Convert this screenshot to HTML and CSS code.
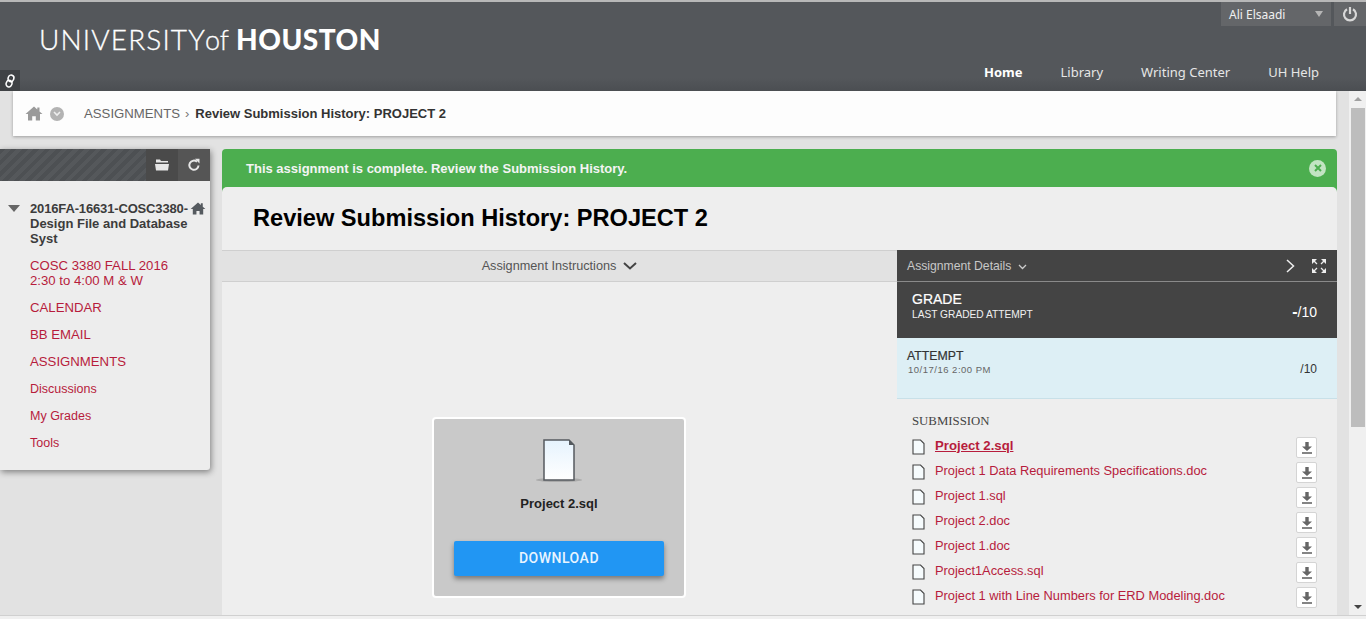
FILE: index.html
```html
<!DOCTYPE html>
<html lang="en">
<head>
    <meta charset="UTF-8">
    <title>Review Submission History: PROJECT 2</title>
    <link rel="stylesheet" href="styles.css">
</head>
<body>
    <header class="top">
        <div class="logo"><span class="logo-light">UNIVERSITY</span><span class="logo-of">of</span><span class="logo-bold">HOUSTON</span></div>
        <div class="top-right">
            <div class="user-row">
                <div class="user">Ali Elsaadi<span class="user-caret"></span></div>
                <div class="power">
                    <svg width="16" height="16" viewBox="0 0 16 16"><path d="M5 3.2a6 6 0 1 0 6 0" fill="none" stroke="#d8d8d8" stroke-width="2.2"/><path d="M8 1v7" stroke="#d8d8d8" stroke-width="2.2"/></svg>
                </div>
            </div>
            <nav class="nav">
                <a class="active">Home</a>
                <a>Library</a>
                <a>Writing Center</a>
                <a>UH Help</a>
            </nav>
        </div>
        <div class="link-badge">
            <svg width="14" height="14" viewBox="0 0 12 12"><g fill="none" stroke="#fff" stroke-width="1.3" transform="rotate(20 6 6)"><rect x="3.6" y="0.8" width="4.8" height="5.6" rx="2.4"/><rect x="3.6" y="5.6" width="4.8" height="5.6" rx="2.4"/></g></svg>
        </div>
    </header>

    <div class="page">
        <div class="page-inner">
            <div class="crumbs">
                <svg class="crumb-home" width="18" height="15" viewBox="0 0 18 15"><path d="M9 0.5L0.5 8h2.5v6.5h4.2v-4.2h3.6v4.2H15V8h2.5L14.500 5.400V1.500h-2.200v1.900z" fill="#9a9a9a"/></svg>
                <span class="crumb-menu">
                    <svg width="8" height="6" viewBox="0 0 8 6"><path d="M1 1l3 3 3-3" fill="none" stroke="#eee" stroke-width="1.6"/></svg>
                </span>
                <span class="crumb-link">ASSIGNMENTS</span>
                <span class="crumb-sep">›</span>
                <span class="crumb-current">Review Submission History: PROJECT 2</span>
            </div>

            <div class="columns">
                <aside class="side">
                    <div class="side-bar">
                        <div class="side-stripes"></div>
                        <div class="side-tool side-tool-first">
                            <svg width="14" height="12" viewBox="0 0 14 12"><path d="M1 0.500h4l1 1.500h7v1.500H1zM0 5h14l-1 6.500H1z" fill="#e6e6e6"/></svg>
                        </div>
                        <div class="side-tool">
                            <svg width="14" height="14" viewBox="0 0 14 14"><path d="M11.500 7.500a4.600 4.600 0 1 1-1.500-3.700" fill="none" stroke="#e6e6e6" stroke-width="2"/><path d="M8 0.800h4.500v4.700z" fill="#e6e6e6"/></svg>
                        </div>
                    </div>
                    <div class="side-body">
                        <div class="course">
                            <span class="course-caret"></span>
                            <span class="course-name"><span class="course-code">2016FA-16631-COSC3380-</span><br>Design File and Database<br>Syst</span>
                            <svg class="course-home" width="16" height="13" viewBox="0 0 18 15"><path d="M9 0.5L0.5 8h2.5v6.500h4.200v-4.200h3.600v4.200H15V8h2.500L14.500 5.400V1.500h-2.200v1.900z" fill="#555a5f"/></svg>
                        </div>
                        <ul class="side-menu">
                            <li>COSC 3380 FALL 2016<br>2:30 to 4:00 M &amp; W</li>
                            <li>CALENDAR</li>
                            <li>BB EMAIL</li>
                            <li>ASSIGNMENTS</li>
                            <li class="side-small">Discussions</li>
                            <li class="side-small">My Grades</li>
                            <li class="side-small">Tools</li>
                        </ul>
                    </div>
                </aside>

                <main class="main">
                    <div class="notice">
                        <span>This assignment is complete. Review the Submission History.</span>
                        <span class="notice-close">
                            <svg width="8" height="8" viewBox="0 0 8 8"><path d="M1 1l6 6M7 1L1 7" stroke="#4cae4f" stroke-width="2"/></svg>
                        </span>
                    </div>
                    <div class="panel">
                        <h1 class="title">Review Submission History: PROJECT 2</h1>
                        <div class="split">
                            <section class="viewer">
                                <div class="instructions">Assignment Instructions
                                    <svg width="14" height="8" viewBox="0 0 14 8"><path d="M1 1l6 5.500L13 1" fill="none" stroke="#444" stroke-width="2"/></svg>
                                </div>
                                <div class="viewer-body">
                                    <div class="file-card">
                                        <svg class="file-big" width="48" height="46" viewBox="0 0 48 46">
                                            <defs>
                                                <linearGradient id="sheet" x1="0" y1="0" x2="0" y2="1"><stop offset="0" stop-color="#e6f3fd"/><stop offset="1" stop-color="#ffffff"/></linearGradient>
                                            </defs>
                                            <ellipse cx="24" cy="41" rx="23" ry="2" fill="#a9a9a9"/>
                                            <path d="M9 1h25l5 5v35H9z" fill="url(#sheet)" stroke="#555a5f" stroke-width="1.500"/>
                                            <path d="M34 1l5 5h-5z" fill="#555a5f"/>
                                        </svg>
                                        <div class="file-big-name">Project 2.sql</div>
                                        <a class="download">DOWNLOAD</a>
                                    </div>
                                </div>
                            </section>
                            <section class="details">
                                <div class="details-head">
                                    <span class="details-label">Assignment Details
                                        <svg class="details-caret" width="9" height="6" viewBox="0 0 9 6"><path d="M1 1l3.500 3.500L8 1" fill="none" stroke="#ccc" stroke-width="1.300"/></svg>
                                    </span>
                                    <svg class="details-next" width="9" height="14" viewBox="0 0 9 14"><path d="M1 1l6.500 6L1 13" fill="none" stroke="#eee" stroke-width="1.500"/></svg>
                                    <svg width="16" height="16" viewBox="0 0 16 16"><path d="M1 1h5L1 6zM15 1h-5l5 5zM1 15h5l-5-5zM15 15h-5l5-5z" fill="#eee"/><path d="M2.500 2.500L6 6M13.500 2.500L10 6M2.500 13.500L6 10M13.500 13.500L10 10" stroke="#eee" stroke-width="1.300"/></svg>
                                </div>
                                <div class="grade">
                                    <div>
                                        <div class="grade-title">GRADE</div>
                                        <div class="grade-sub">LAST GRADED ATTEMPT</div>
                                    </div>
                                    <div class="grade-value"><b>-</b>/10</div>
                                </div>
                                <div class="attempt">
                                    <div>
                                        <div class="attempt-title">ATTEMPT</div>
                                        <div class="attempt-date">10/17/16 2:00 PM</div>
                                    </div>
                                    <div class="attempt-value">/10</div>
                                </div>
                                <div class="submission">
                                    <div class="submission-title">SUBMISSION</div>
                                    <ul class="files">
                                        <li class="current"><svg class="doc" width="13" height="16" viewBox="0 0 13 16"><use href="#doc"/></svg><a>Project 2.sql</a><span class="dl"><svg width="12" height="13" viewBox="0 0 12 13"><use href="#dl"/></svg></span></li>
                                        <li><svg class="doc" width="13" height="16" viewBox="0 0 13 16"><use href="#doc"/></svg><a>Project 1 Data Requirements Specifications.doc</a><span class="dl"><svg width="12" height="13" viewBox="0 0 12 13"><use href="#dl"/></svg></span></li>
                                        <li><svg class="doc" width="13" height="16" viewBox="0 0 13 16"><use href="#doc"/></svg><a>Project 1.sql</a><span class="dl"><svg width="12" height="13" viewBox="0 0 12 13"><use href="#dl"/></svg></span></li>
                                        <li><svg class="doc" width="13" height="16" viewBox="0 0 13 16"><use href="#doc"/></svg><a>Project 2.doc</a><span class="dl"><svg width="12" height="13" viewBox="0 0 12 13"><use href="#dl"/></svg></span></li>
                                        <li><svg class="doc" width="13" height="16" viewBox="0 0 13 16"><use href="#doc"/></svg><a>Project 1.doc</a><span class="dl"><svg width="12" height="13" viewBox="0 0 12 13"><use href="#dl"/></svg></span></li>
                                        <li><svg class="doc" width="13" height="16" viewBox="0 0 13 16"><use href="#doc"/></svg><a>Project1Access.sql</a><span class="dl"><svg width="12" height="13" viewBox="0 0 12 13"><use href="#dl"/></svg></span></li>
                                        <li><svg class="doc" width="13" height="16" viewBox="0 0 13 16"><use href="#doc"/></svg><a>Project 1 with Line Numbers for ERD Modeling.doc</a><span class="dl"><svg width="12" height="13" viewBox="0 0 12 13"><use href="#dl"/></svg></span></li>
                                    </ul>
                                </div>
                            </section>
                        </div>
                    </div>
                </main>
            </div>
        </div>
        <div class="scrollbar">
            <span class="arrow-up"></span>
            <div class="thumb"></div>
            <span class="arrow-down"></span>
        </div>
    </div>
    <div class="bottom-strip"></div>

    <svg class="sprites" width="0" height="0">
        <symbol id="doc" viewBox="0 0 13 16"><path d="M1 1h7.500L12 4.500V15H1z" fill="#f6fbfd" stroke="#444" stroke-width="1.100"/></symbol>
        <symbol id="dl" viewBox="0 0 12 13"><path d="M4.300 1h3.400v4.500H11L6 10 1 5.500h3.300z" fill="#666"/><path d="M1 12h10" stroke="#666" stroke-width="1.600"/></symbol>
    </svg>
</body>
</html>
```

FILE: styles.css
```css
* {
    box-sizing: border-box;
}
html, body {
    height: 100%;
}
body {
    margin: 0;
    overflow: hidden;
    font-family: "Liberation Sans", Arial, sans-serif;
    background-color: #e2e2e2;
    color: #222;
}
ul {
    list-style: none;
    margin: 0;
    padding: 0;
}

/* top banner */
.top {
    position: relative;
    height: 91px;
    padding: 0 11px 0 39px;
    display: flex;
    justify-content: space-between;
    background: linear-gradient(#54575b 85%, #4b4e52);
    border-top: 2px solid #b8b8b8;
}
.logo {
    padding-top: 20px;
    color: #fff;
    font-family: "Lato", sans-serif;
    font-size: 28px;
    line-height: 34px;
    white-space: nowrap;
}
.logo-light {
    font-weight: 300;
    letter-spacing: 1.15px;
    -webkit-text-stroke: 0.3px #fff;
}
.logo-of {
    font-weight: 300;
    font-size: 27px;
    margin: 0 7px 0 -1px;
    -webkit-text-stroke: 0.3px #fff;
}
.logo-bold {
    font-weight: 900;
    letter-spacing: 0.5px;
}
.top-right {
    display: flex;
    flex-direction: column;
    align-items: flex-end;
}
.user-row {
    display: flex;
    gap: 3px;
    margin-right: -11px;
}
.user {
    width: 110px;
    height: 24px;
    padding-left: 8px;
    display: flex;
    align-items: center;
    justify-content: space-between;
    background-color: #646669;
    color: #f0f0f0;
    font-family: "Noto Sans", sans-serif;
    font-size: 12px;
}
.user-caret {
    margin-right: 8px;
    border-left: 4.500px solid transparent;
    border-right: 4.500px solid transparent;
    border-top: 6px solid #b5b5b5;
}
.power {
    width: 32px;
    height: 24px;
    display: flex;
    align-items: center;
    justify-content: center;
    background-color: #646669;
}
.nav {
    display: flex;
    gap: 38px;
    margin-top: 37px;
    margin-right: 36px;
    font-family: "Noto Sans", sans-serif;
    font-size: 13px;
    line-height: 18px;
    color: #e6e6e6;
}
.nav .active {
    font-weight: 700;
    color: #fff;
}
.link-badge {
    position: absolute;
    left: 0;
    top: 68px;
    width: 20px;
    height: 21px;
    display: flex;
    align-items: center;
    justify-content: center;
    background-color: #3f4245;
}

/* everything under the banner */
.page {
    display: flex;
    height: 524px;
    overflow: hidden;
}
.page-inner {
    flex: 1;
    min-width: 0;
    overflow: hidden;
    padding-right: 12px;
}
.crumbs {
    height: 45px;
    margin: 0 1px 0 13px;
    padding-left: 12px;
    display: flex;
    align-items: center;
    background-color: #fdfdfd;
    box-shadow: 0 1px 3px rgba(0, 0, 0, 0.3);
    font-size: 13px;
}
.crumb-menu {
    width: 14px;
    height: 14px;
    margin: 0 20px 0 7px;
    display: flex;
    align-items: center;
    justify-content: center;
    border-radius: 50%;
    background-color: #b3b3b3;
}
.crumb-link {
    color: #666;
    font-size: 13.200px;
}
.crumb-sep {
    margin: 0 6px 0 5px;
    color: #777;
}
.crumb-current {
    font-weight: 700;
    color: #333;
}
.columns {
    display: flex;
    align-items: flex-start;
    gap: 12px;
    margin-top: 13px;
}

/* course menu */
.side {
    width: 210px;
    flex-shrink: 0;
    background-color: #ededed;
    box-shadow: 1px 2px 6px rgba(0, 0, 0, 0.45);
    border-radius: 0 0 3px 0;
}
.side-bar {
    height: 32px;
    display: flex;
    background-color: #56585b;
}
.side-stripes {
    flex: 1;
    background: repeating-linear-gradient(135deg, #4d5053 0, #4d5053 4px, #55585b 4px, #55585b 8px);
}
.side-tool {
    width: 32px;
    display: flex;
    align-items: center;
    justify-content: center;
    background-color: #555;
}
.side-tool-first {
    background-color: #4a4a4a;
}
.side-body {
    height: 289px;
    padding: 20px 0 0 8px;
}
.course {
    position: relative;
    display: flex;
    font-size: 13px;
    font-weight: 700;
    line-height: 15px;
    color: #3c3c3c;
}
.course-caret {
    margin: 4px 10px 0 0;
    flex-shrink: 0;
    border-left: 6px solid transparent;
    border-right: 6px solid transparent;
    border-top: 7px solid #666;
}
.course-name {
    width: 160px;
    white-space: nowrap;
}
.course-code {
    letter-spacing: -0.15px;
}
.course-home {
    position: absolute;
    left: 182px;
    top: 1px;
}
.side-menu {
    margin-top: 12px;
    padding-left: 22px;
    font-size: 13.200px;
    line-height: 15px;
    color: #b71c3c;
}
.side-menu li {
    margin-bottom: 12px;
}
.side-menu .side-small {
    padding-top: 1px;
    margin-bottom: 11px;
    font-size: 12.500px;
}

/* main panel */
.main {
    flex: 1;
    min-width: 0;
}
.notice {
    height: 45px;
    padding: 0 11px 7px 24px;
    display: flex;
    align-items: center;
    justify-content: space-between;
    background-color: #4cae4f;
    border-radius: 4px 4px 0 0;
    color: #f4f4f4;
    font-size: 13px;
    font-weight: 700;
}
.notice-close {
    width: 17px;
    height: 17px;
    display: flex;
    align-items: center;
    justify-content: center;
    border-radius: 50%;
    background-color: #c2e4c3;
}
.panel {
    margin-top: -7px;
    background-color: #eeeeee;
    border-radius: 5px 5px 0 0;
}
.title {
    height: 63px;
    margin: 0;
    padding: 17px 0 0 31px;
    font-size: 23.600px;
    line-height: 28px;
    font-weight: 700;
    color: #000;
}
.split {
    display: flex;
    height: 365px;
}
.viewer {
    width: 675px;
    flex-shrink: 0;
    display: flex;
    flex-direction: column;
}
.instructions {
    height: 32px;
    display: flex;
    align-items: center;
    justify-content: center;
    gap: 7px;
    background-color: #e2e2e2;
    border-top: 1px solid #cfcfcf;
    border-bottom: 1px solid #cfcfcf;
    color: #555;
    font-size: 12.700px;
}
.viewer-body {
    flex: 1;
    padding-top: 135px;
    display: flex;
    justify-content: center;
}
.file-card {
    width: 254px;
    height: 181px;
    padding-top: 20px;
    margin-left: -1px;
    display: flex;
    flex-direction: column;
    align-items: center;
    background-color: #c9c9c9;
    border: 2px solid #fff;
    border-radius: 4px;
}
.file-big {
    display: block;
}
.file-big-name {
    margin-top: 11px;
    font-size: 13px;
    font-weight: 700;
    line-height: 16px;
    color: #222;
}
.download {
    width: 210px;
    height: 35px;
    margin-top: 29px;
    padding-bottom: 2px;
    display: flex;
    align-items: center;
    justify-content: center;
    background-color: #2196f3;
    border-radius: 2px;
    box-shadow: 0 3px 5px rgba(0, 0, 0, 0.4);
    color: #e8f4ff;
    font-family: "Roboto", sans-serif;
    font-size: 14px;
    font-weight: 500;
    letter-spacing: 0.5px;
}
.details {
    flex: 1;
    min-width: 0;
}
.details-head {
    height: 32px;
    padding: 0 10px;
    display: flex;
    align-items: center;
    background-color: #444;
    border-bottom: 1px solid #8a8a8a;
}
.details-label {
    flex: 1;
    color: #c8c8c8;
    font-size: 12.200px;
}
.details-caret {
    margin-left: 3px;
}
.details-next {
    margin-right: 16px;
}
.grade {
    height: 56px;
    padding: 0 20px 6px 15px;
    display: flex;
    align-items: center;
    justify-content: space-between;
    background-color: #444;
    color: #fff;
}
.grade-title {
    font-size: 14px;
    line-height: 14px;
    font-weight: 400;
    -webkit-text-stroke: 0.2px #fff;
}
.grade-sub {
    margin-top: 2px;
    font-size: 10.200px;
    line-height: 14px;
    color: #f0f0f0;
}
.grade-value {
    padding-top: 10px;
    font-size: 14px;
}
.grade-value b {
    font-size: 16px;
}
.attempt {
    height: 61px;
    padding: 0 20px 11px 10px;
    display: flex;
    align-items: center;
    justify-content: space-between;
    background-color: #ddeff5;
    border-bottom: 1px solid #c8e0e8;
}
.attempt-title {
    font-size: 12.300px;
    line-height: 14px;
    color: #333;
    -webkit-text-stroke: 0.2px #333;
}
.attempt-date {
    margin: 1px 0 0 1px;
    font-size: 9.500px;
    line-height: 12px;
    letter-spacing: 0.5px;
    color: #666;
}
.attempt-value {
    padding-top: 12px;
    font-size: 12px;
    color: #333;
}
.submission {
    padding: 15px 20px 0 15px;
}
.submission-title {
    font-family: "Liberation Serif", serif;
    font-size: 12.800px;
    line-height: 14px;
    color: #444;
}
.files {
    margin-top: 7px;
}
.files li {
    height: 25px;
    display: flex;
    align-items: center;
    color: #b71c3c;
    font-size: 12.850px;
}
.files a {
    flex: 1;
    margin-left: 10px;
    padding-bottom: 5px;
}
.files .current a {
    font-size: 13.200px;
    font-weight: 700;
    text-decoration: underline;
}
.doc {
    flex-shrink: 0;
    margin-bottom: 1px;
}
.dl {
    width: 21px;
    height: 21px;
    display: flex;
    align-items: center;
    justify-content: center;
    background-color: #fff;
    border: 1px solid #d4d4d4;
    border-radius: 2px;
}

/* window scrollbar */
.scrollbar {
    width: 17px;
    flex-shrink: 0;
    display: flex;
    flex-direction: column;
    align-items: center;
    background-color: #f0f0f0;
}
.arrow-up {
    margin-top: 6px;
    border-left: 4px solid transparent;
    border-right: 4px solid transparent;
    border-bottom: 4px solid #a0a0a0;
}
.thumb {
    width: 14px;
    height: 319px;
    margin-top: 7px;
    background-color: #bdbdbd;
}
.arrow-down {
    margin-top: auto;
    margin-bottom: 6px;
    border-left: 4px solid transparent;
    border-right: 4px solid transparent;
    border-top: 4px solid #444;
}
.bottom-strip {
    height: 4px;
    background-color: #f0f0f0;
    border-top: 1px solid #d0d0d0;
}
.sprites {
    display: block;
}
```
